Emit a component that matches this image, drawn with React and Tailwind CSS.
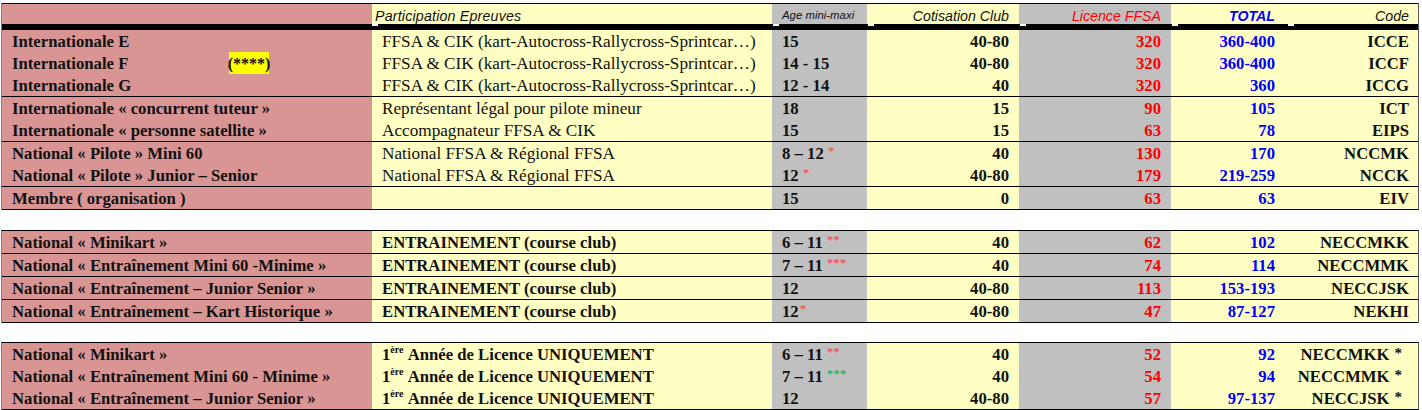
import React from "react";

const COLS = "grid grid-cols-[370px_400px_95px_152px_152px_116px_131px] grid-rows-[22px]";
const SERIF = "font-['Liberation_Serif',serif]";

const sections = [
  [
    [
      { name: "Internationale E", part: "FFSA & CIK (kart-Autocross-Rallycross-Sprintcar…)", age: "15", cot: "40-80", lic: "320", tot: "360-400", code: "ICCE" },
      { name: "Internationale F", hl: "(****)", part: "FFSA & CIK (kart-Autocross-Rallycross-Sprintcar…)", age: "14 - 15", cot: "40-80", lic: "320", tot: "360-400", code: "ICCF" },
      { name: "Internationale G", part: "FFSA & CIK (kart-Autocross-Rallycross-Sprintcar…)", age: "12 - 14", cot: "40", lic: "320", tot: "360", code: "ICCG" },
    ],
    [
      { name: "Internationale « concurrent tuteur »", part: "Représentant légal pour pilote mineur", age: "18", cot: "15", lic: "90", tot: "105", code: "ICT" },
      { name: "Internationale « personne satellite »", part: "Accompagnateur FFSA & CIK", age: "15", cot: "15", lic: "63", tot: "78", code: "EIPS" },
    ],
    [
      { name: "National « Pilote » Mini 60", part: "National FFSA & Régional FFSA", age: "8 – 12", star: "*", cot: "40", lic: "130", tot: "170", code: "NCCMK" },
      { name: "National « Pilote » Junior – Senior", part: "National FFSA & Régional FFSA", age: "12", star: "*", cot: "40-80", lic: "179", tot: "219-259", code: "NCCK" },
    ],
    [
      { name: "Membre ( organisation )", part: "", age: "15", cot: "0", lic: "63", tot: "63", code: "EIV" },
    ],
  ],
  [
    [{ name: "National « Minikart »", part: "ENTRAINEMENT (course club)", pb: true, age: "6 – 11", star: "**", cot: "40", lic: "62", tot: "102", code: "NECCMKK" }],
    [{ name: "National « Entraînement Mini 60 -Minime »", part: "ENTRAINEMENT (course club)", pb: true, age: "7 – 11", star: "***", cot: "40", lic: "74", tot: "114", code: "NECCMMK" }],
    [{ name: "National « Entraînement – Junior Senior »", part: "ENTRAINEMENT (course club)", pb: true, age: "12", cot: "40-80", lic: "113", tot: "153-193", code: "NECCJSK" }],
    [{ name: "National « Entraînement – Kart Historique »", part: "ENTRAINEMENT (course club)", pb: true, age: "12", star: "*", tight: true, cot: "40-80", lic: "47", tot: "87-127", code: "NEKHI" }],
  ],
  [
    [
      { name: "National « Minikart »", first: true, age: "6 – 11", star: "**", cot: "40", lic: "52", tot: "92", code: "NECCMKK", cstar: true },
      { name: "National « Entraînement Mini 60 - Minime »", first: true, age: "7 – 11", star: "***", starColor: "green", cot: "40", lic: "54", tot: "94", code: "NECCMMK", cstar: true },
      { name: "National « Entraînement – Junior Senior »", first: true, age: "12", cot: "40-80", lic: "57", tot: "97-137", code: "NECCJSK", cstar: true },
    ],
  ],
];

const CELL = "flex items-center pt-[2px] overflow-hidden whitespace-nowrap";

function Row({ r }) {
  return (
    <div className={`${COLS} h-[22px] text-[16.7px] leading-[20px] text-[#111]`}>
      <div className={`bg-[#d99594] pl-[10px] font-bold ${CELL}`}>
        {r.hl ? (
          <>
            <span className="w-[217px] shrink-0">{r.name}</span>
            <span className="bg-[#ffff00] h-[22px] mt-[-2px] w-[40px] shrink-0 flex items-center justify-center text-[16px] font-bold pt-[1px]">
              {r.hl}
            </span>
          </>
        ) : (
          r.name
        )}
      </div>
      <div className={`bg-[#ffffc4] pl-[10px] ${CELL} ${r.pb || r.first ? "font-bold" : "text-[17.2px]"}`}>
        {r.first ? (
          <>
            1<span className="text-[10px] relative top-[-5px]">ère</span>&nbsp;Année de Licence UNIQUEMENT
          </>
        ) : (
          r.part
        )}
      </div>
      <div className={`bg-[#c0c0c0] pl-[10px] font-bold ${CELL}`}>
        {r.age}
        {r.star ? (
          <span
            className={`${r.tight ? "ml-[1px]" : "ml-[4px]"} text-[13px] relative top-[-3px] font-normal ${
              r.starColor === "green" ? "text-[#00b050]" : "text-[#ff3b3b]"
            }`}
          >
            {r.star}
          </span>
        ) : null}
      </div>
      <div className={`bg-[#ffffc4] pr-[10px] font-bold justify-end ${CELL}`}>{r.cot}</div>
      <div className={`bg-[#c0c0c0] pr-[10px] font-bold justify-end text-[#ff0000] ${CELL}`}>{r.lic}</div>
      <div className={`bg-[#ffffc4] pr-[12px] font-bold justify-end text-[#0000ff] ${CELL}`}>{r.tot}</div>
      <div className={`bg-[#ffffc4] pr-[9px] font-bold justify-end ${CELL}`}>
        {r.code}
        {r.cstar ? <span className="ml-[5px] mr-[7px] relative top-[-2px] text-[15px]">*</span> : null}
      </div>
    </div>
  );
}

function Group({ rows }) {
  return (
    <div className="border-b border-black">
      {rows.map((r, i) => (
        <Row key={i} r={r} />
      ))}
    </div>
  );
}

function Mark() {
  return <div className="w-[6px] h-[2px] bg-white ml-[1px]" />;
}

export default function App() {
  return (
    <div className={`bg-white w-[1422px] h-[410px] pt-[3px] ${SERIF}`}>
      <div className="ml-[1px] w-[1418px] border-l border-[#7f7f7f] border-r border-r-[#555]">
        <div className="border-t border-black">
          <div className="grid grid-cols-[370px_400px_95px_152px_152px_116px_131px] grid-rows-[20px] h-[20px] font-['Liberation_Sans',sans-serif] italic text-[14.2px] leading-[20px]">
            <div className="bg-[#d99594]" />
            <div className="bg-[#ffffc4] pl-[3px] pt-[2px] text-[#111] tracking-[0.2px] whitespace-nowrap overflow-hidden">Participation Epreuves</div>
            <div className="bg-[#c0c0c0] pl-[10px] pt-[1px] text-[11.4px] text-[#111] whitespace-nowrap overflow-hidden">Age mini-maxi</div>
            <div className="bg-[#ffffc4] pr-[10px] pt-[2px] text-right text-[#111] whitespace-nowrap overflow-hidden">Cotisation Club</div>
            <div className="bg-[#c0c0c0] pr-[10px] pt-[2px] text-right text-[#ff0000] whitespace-nowrap overflow-hidden">Licence FFSA</div>
            <div className="bg-[#ffffc4] pr-[12px] pt-[2px] text-right text-[#0000ff] font-bold whitespace-nowrap overflow-hidden">TOTAL</div>
            <div className="bg-[#ffffc4] pr-[9px] pt-[2px] text-right text-[#111] whitespace-nowrap overflow-hidden">Code</div>
          </div>
          <div className="grid grid-cols-[370px_400px_95px_152px_152px_116px_131px] h-[6px] bg-black">
            <div />
            <div className="ml-[-1px]"><Mark /></div>
            <div><Mark /></div>
            <div><Mark /></div>
            <div><Mark /></div>
            <div><Mark /></div>
            <div><Mark /></div>
          </div>
        </div>
        {sections[0].map((g, i) => (
          <Group key={i} rows={g} />
        ))}
      </div>
      <div className="h-[20px]" />
      <div className="ml-[1px] w-[1418px] border-l border-[#7f7f7f] border-r border-r-[#555] border-t border-t-black">
        {sections[1].map((g, i) => (
          <Group key={i} rows={g} />
        ))}
      </div>
      <div className="h-[19px]" />
      <div className="ml-[1px] w-[1418px] border-l border-[#7f7f7f] border-r border-r-[#555] border-t border-t-black">
        {sections[2].map((g, i) => (
          <Group key={i} rows={g} />
        ))}
      </div>
    </div>
  );
}
